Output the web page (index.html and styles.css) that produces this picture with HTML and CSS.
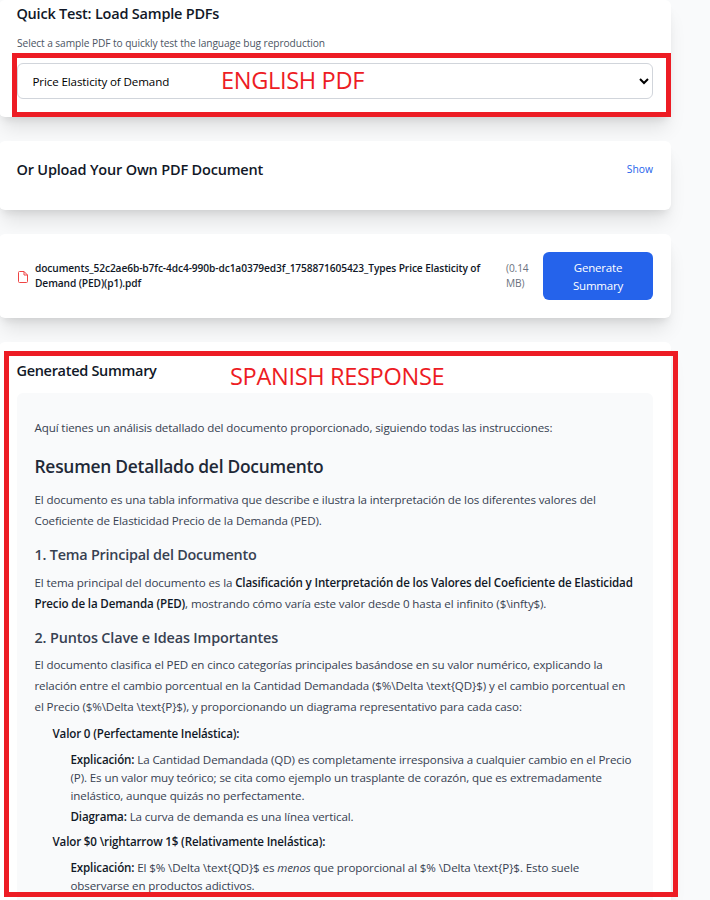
FILE: index.html
```html
<!DOCTYPE html>
<html lang="en">
<head>
<meta charset="utf-8">
<title>PDF Summary</title>
<link rel="stylesheet" href="styles.css">
</head>
<body>
<main class="page">
  <section class="card card-samples">
    <h2 class="card-title title-samples">Quick Test: Load Sample PDFs</h2>
    <p class="hint">Select a sample PDF to quickly test the language bug reproduction</p>
    <select class="select" aria-label="Sample PDF"><option>Price Elasticity of Demand</option></select>
  </section>

  <section class="card card-upload">
    <h2 class="card-title">Or Upload Your Own PDF Document</h2>
    <a class="show">Show</a>
  </section>

  <section class="card card-file">
    <svg class="file-icon" viewBox="0 0 12 14" fill="none" stroke="#ef4444" stroke-linejoin="round"><path d="M2.5 1.5h4.5L10.5 5v6.5a1 1 0 0 1-1 1h-7a1 1 0 0 1-1-1v-9a1 1 0 0 1 1-1z"/><path d="M7 1.5V5h3.5"/></svg>
    <p class="file-name">documents_52c2ae6b-b7fc-4dc4-990b-dc1a0379ed3f_1758871605423_Types Price Elasticity of<br>Demand (PED)(p1).pdf</p>
    <p class="file-size">(0.14<br>MB)</p>
    <button class="generate">Generate<br>Summary</button>
  </section>

  <section class="card card-summary">
    <h2 class="card-title title-generated">Generated Summary</h2>
    <article class="summary">
      <p class="intro">Aquí tienes un análisis detallado del documento proporcionado, siguiendo todas las instrucciones:</p>
      <h2>Resumen Detallado del Documento</h2>
      <p>El documento es una tabla informativa que describe e ilustra la interpretación de los diferentes valores del<br>Coeficiente de Elasticidad Precio de la Demanda (PED).</p>
      <h3>1. Tema Principal del Documento</h3>
      <p>El tema principal del documento es la <strong>Clasificación y Interpretación de los Valores del Coeficiente de Elasticidad<br>Precio de la Demanda (PED)</strong>, mostrando cómo varía este valor desde 0 hasta el infinito ($\infty$).</p>
      <h3 class="key-points">2. Puntos Clave e Ideas Importantes</h3>
      <p>El documento clasifica el PED en cinco categorías principales basándose en su valor numérico, explicando la<br>relación entre el cambio porcentual en la Cantidad Demandada ($%\Delta \text{QD}$) y el cambio porcentual en<br>el Precio ($%\Delta \text{P}$), y proporcionando un diagrama representativo para cada caso:</p>
      <ul class="values">
        <li><strong>Valor 0 (Perfectamente Inelástica):</strong>
          <ul>
            <li><strong>Explicación:</strong> La Cantidad Demandada (QD) es completamente irresponsiva a cualquier cambio en el Precio<br>(P). Es un valor muy teórico; se cita como ejemplo un trasplante de corazón, que es extremadamente<br>inelástico, aunque quizás no perfectamente.</li>
            <li><strong>Diagrama:</strong> La curva de demanda es una línea vertical.</li>
          </ul>
        </li>
        <li><strong>Valor $0 \rightarrow 1$ (Relativamente Inelástica):</strong>
          <ul>
            <li><strong>Explicación:</strong> El $% \Delta \text{QD}$ es <em>menos</em> que proporcional al $% \Delta \text{P}$. Esto suele<br>observarse en productos adictivos.</li>
          </ul>
        </li>
      </ul>
    </article>
  </section>
</main>
<div class="frame frame-english"></div>
<div class="note note-english">ENGLISH PDF</div>
<div class="frame frame-spanish"></div>
<div class="note note-spanish">SPANISH RESPONSE</div>
</body>
</html>
```
FILE: styles.css
```css
* { box-sizing: border-box; margin: 0; padding: 0; }

body {
  position: relative;
  height: 900px;
  overflow: hidden;
  background: #f9fafb;
  color: #111827;
  font-family: "Open Sans", "Noto Sans", sans-serif;
  font-size: 11.6px;
  line-height: 18px;
  letter-spacing: -0.12px;
  white-space: nowrap;
}

.page {
  display: flex;
  flex-direction: column;
  gap: 24px;
  width: 672px;
  height: 900px;
  margin-left: -1px;
}

.card {
  flex: none;
  padding: 18px;
  border-radius: 6px;
  background: #fff;
  box-shadow: 0 15px 19px -4px rgba(0, 0, 0, .1), 0 6px 8px -4px rgba(0, 0, 0, .1);
}

.card-title {
  margin-left: -0.6px;
  font-size: 14.5px;
  font-weight: 560;
  line-height: 21px;
  letter-spacing: -0.18px;
}

.card-samples { height: 117px; padding-top: 3px; }
.title-samples { letter-spacing: -0.21px; }

.hint {
  margin-top: 12px;
  color: #4b5563;
  font-size: 10.2px;
  line-height: 15px;
  letter-spacing: -0.08px;
}

.select {
  display: block;
  width: 636px;
  height: 36px;
  margin-top: 12px;
  padding: 0 0 0 10.5px;
  border: 1px solid #d1d5db;
  border-radius: 6px;
  background-color: #fff;
  color: #000;
  font: inherit;
  letter-spacing: -0.12px;
}

.card-upload {
  display: flex;
  justify-content: space-between;
  height: 69px;
}

.show {
  color: #2563eb;
  font-size: 10.3px;
  line-height: 20px;
  letter-spacing: 0;
}

.card-file { display: flex; align-items: center; height: 84px; }
.file-icon { flex: none; width: 12px; height: 14px; margin: 1px 6px 0 0; }

.file-name {
  width: 471px;
  font-size: 10.2px;
  font-weight: 550;
  line-height: 15px;
  letter-spacing: -0.1px;
}

.file-size {
  flex: 1;
  color: #6b7280;
  font-size: 10.2px;
  line-height: 15px;
}

.generate {
  width: 110px;
  height: 48px;
  padding-top: 1px;
  border: 0;
  border-radius: 6px;
  background: #2563eb;
  color: #fff;
  font: 500 11.5px/18px "Open Sans", sans-serif;
  letter-spacing: -0.2px;
}

.card-summary {
  display: flex;
  flex: 1;
  flex-direction: column;
  min-height: 0;
  padding-bottom: 0;
  border-radius: 6px 6px 0 0;
}

.title-generated { flex: none; letter-spacing: -0.3px; }

.summary {
  flex: 1;
  min-height: 0;
  margin-top: 12px;
  padding: 24px 17.5px 0;
  border-radius: 6px 6px 0 0;
  background: #f9fafb;
  color: #374151;
}

.summary p { line-height: 21px; }
.summary strong { color: #111827; font-weight: 560; letter-spacing: -0.15px; }

.summary h2 {
  margin: 16px 0 11px;
  color: #1f2937;
  font-size: 17.4px;
  font-weight: 560;
  line-height: 24px;
  letter-spacing: -0.25px;
}

.summary h3 {
  margin: 13px 0 7px;
  font-size: 14.4px;
  font-weight: 550;
  line-height: 21px;
  letter-spacing: -0.22px;
}

.summary .key-points { margin-bottom: 6px; letter-spacing: -0.14px; }

.summary ul { list-style: none; }
.values { margin-top: 8px; padding-left: 18px; }
.values ul { margin-top: 8px; padding-left: 18px; }
.values > li + li { margin-top: 7px; }
.values ul > li + li { margin-top: 3px; }

.frame { position: absolute; border: 5px solid #ed1c24; }
.frame-english { left: 12px; top: 53px; width: 659px; height: 64px; }
.frame-spanish { left: 4px; top: 351px; width: 674px; height: 546px; }

.note {
  position: absolute;
  color: #ed1c24;
  font-size: 23.6px;
  line-height: 32px;
  letter-spacing: -0.35px;
}

.note-english { left: 221px; top: 64px; }
.note-spanish { left: 230px; top: 360px; }
```
